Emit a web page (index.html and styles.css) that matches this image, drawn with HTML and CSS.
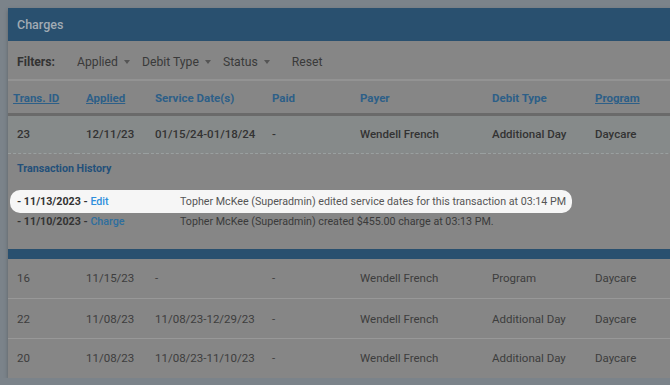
FILE: index.html
```html
<!DOCTYPE html>
<html lang="en">
  <head>
    <meta charset="UTF-8" />
    <meta name="viewport" content="width=device-width, initial-scale=1.0" />
    <title>Charges</title>
    <link rel="stylesheet" href="styles.css">
  </head>
  <body>
    <div class="card">
      <div class="card-title">Charges</div>

      <div class="filters">
        <span class="filters-label">Filters:</span>
        <span class="filter">Applied <i class="caret"></i></span>
        <span class="filter">Debit Type <i class="caret"></i></span>
        <span class="filter">Status <i class="caret"></i></span>
        <span class="reset">Reset</span>
      </div>

      <table class="charges">
        <colgroup>
          <col style="width: 69px" />
          <col style="width: 69px" />
          <col style="width: 117px" />
          <col style="width: 88px" />
          <col style="width: 132px" />
          <col style="width: 103px" />
          <col />
        </colgroup>
        <thead>
          <tr>
            <th class="first"><a href="#">Trans. ID</a></th>
            <th><a href="#">Applied</a></th>
            <th>Service Date(s)</th>
            <th>Paid</th>
            <th>Payer</th>
            <th>Debit Type</th>
            <th><a href="#">Program</a></th>
          </tr>
        </thead>
        <tbody>
          <tr class="row-open">
            <td>23</td>
            <td>12/11/23</td>
            <td>01/15/24-01/18/24</td>
            <td>-</td>
            <td>Wendell French</td>
            <td>Additional Day</td>
            <td>Daycare</td>
          </tr>
          <tr class="history-row">
            <td colspan="7">
              <div class="history-title">Transaction History</div>
              <div class="log log-highlight">
                <span class="log-date">- 11/13/2023 - <a href="#">Edit</a></span>
                <span class="log-text">Topher McKee (Superadmin) edited service dates for this transaction at 03:14 PM</span>
              </div>
              <div class="log">
                <span class="log-date">- 11/10/2023 - <a href="#">Charge</a></span>
                <span class="log-text">Topher McKee (Superadmin) created $455.00 charge at 03:13 PM.</span>
              </div>
            </td>
          </tr>
          <tr class="divider"><td colspan="7"></td></tr>
          <tr>
            <td>16</td>
            <td>11/15/23</td>
            <td>-</td>
            <td>-</td>
            <td>Wendell French</td>
            <td>Program</td>
            <td>Daycare</td>
          </tr>
          <tr>
            <td>22</td>
            <td>11/08/23</td>
            <td>11/08/23-12/29/23</td>
            <td>-</td>
            <td>Wendell French</td>
            <td>Additional Day</td>
            <td>Daycare</td>
          </tr>
          <tr>
            <td>20</td>
            <td>11/08/23</td>
            <td>11/08/23-11/10/23</td>
            <td>-</td>
            <td>Wendell French</td>
            <td>Additional Day</td>
            <td>Daycare</td>
          </tr>
        </tbody>
      </table>
    </div>
  </body>
</html>
```

FILE: styles.css
```css
body {
  margin: 0;
  padding: 8px 0 0 8px;
  background-color: #7b838a;
  font-family: Roboto, "Liberation Sans", sans-serif;
  overflow: hidden;
}

.card {
  width: 700px;
  background-color: #868686;
  box-shadow: 0 2px 4px rgba(0, 0, 0, 0.25);
}

.card-title {
  height: 33px;
  line-height: 34px;
  padding-left: 9px;
  background-color: #29506f;
  color: #a1abb4;
  font-size: 12.5px;
  font-weight: 500;
}

.filters {
  display: flex;
  align-items: center;
  height: 34px;
  padding: 4px 0 0 9px;
  border-bottom: 2px solid #939393;
  color: #3a3a3a;
  font-size: 12.2px;
}

.filters-label {
  font-weight: 700;
  color: #333;
  margin-right: 22px;
}

.filter {
  display: inline-flex;
  align-items: center;
  margin-right: 12px;
}

.caret {
  display: inline-block;
  margin-left: 6px;
  border-left: 3.5px solid transparent;
  border-right: 3.5px solid transparent;
  border-top: 4px solid #555;
}

.reset {
  margin-left: 10px;
}

.charges {
  width: 100%;
  border-collapse: collapse;
  table-layout: fixed;
  font-size: 11.5px;
}

.charges th,
.charges td {
  box-sizing: border-box;
}

.charges th {
  height: 33px;
  padding: 3px 0 0 9px;
  text-align: left;
  color: #2d5f88;
  font-weight: 700;
  border-bottom: 3px solid #6a6a6a;
}

.charges th.first {
  padding-left: 5px;
}

.charges th a {
  color: #2d5f88;
  text-decoration: underline;
}

.charges td {
  height: 40px;
  padding: 0 0 0 9px;
  color: #3d3d3d;
  border-bottom: 1px solid #989898;
}

.row-open td {
  height: 39px;
  background-color: #868a8a;
  color: #333;
  font-weight: 500;
  border-bottom: 1px dashed #9aa0a0;
}

.history-row td {
  height: auto;
  padding: 7px 0 18px 2px;
  border-bottom: none;
  vertical-align: top;
  font-size: 10.7px;
}

.history-title {
  height: 16px;
  line-height: 16px;
  margin-bottom: 13px;
  padding-left: 7px;
  color: #23507a;
  font-weight: 700;
}

.log {
  display: flex;
  align-items: center;
  height: 18px;
  padding: 0 6px 0 7px;
}

.log-date {
  width: 163px;
  font-weight: 700;
  color: #333;
}

.log-date a {
  font-weight: 500;
  color: #2e6e9e;
  text-decoration: none;
}

.log-text {
  color: #3a3a3a;
}

.log-highlight {
  width: fit-content;
  height: 23px;
  border-radius: 10px;
  background-color: #f6f6f6;
}

.log-highlight .log-date a {
  color: #2e8fdc;
}

.log-highlight .log-text {
  color: #555;
}

.history-row + .divider td {
  height: 10px;
  padding: 0;
  border: none;
  background-color: #29506f;
}

.charges tbody tr:last-child td {
  height: 39px;
  border-bottom: none;
}
```
